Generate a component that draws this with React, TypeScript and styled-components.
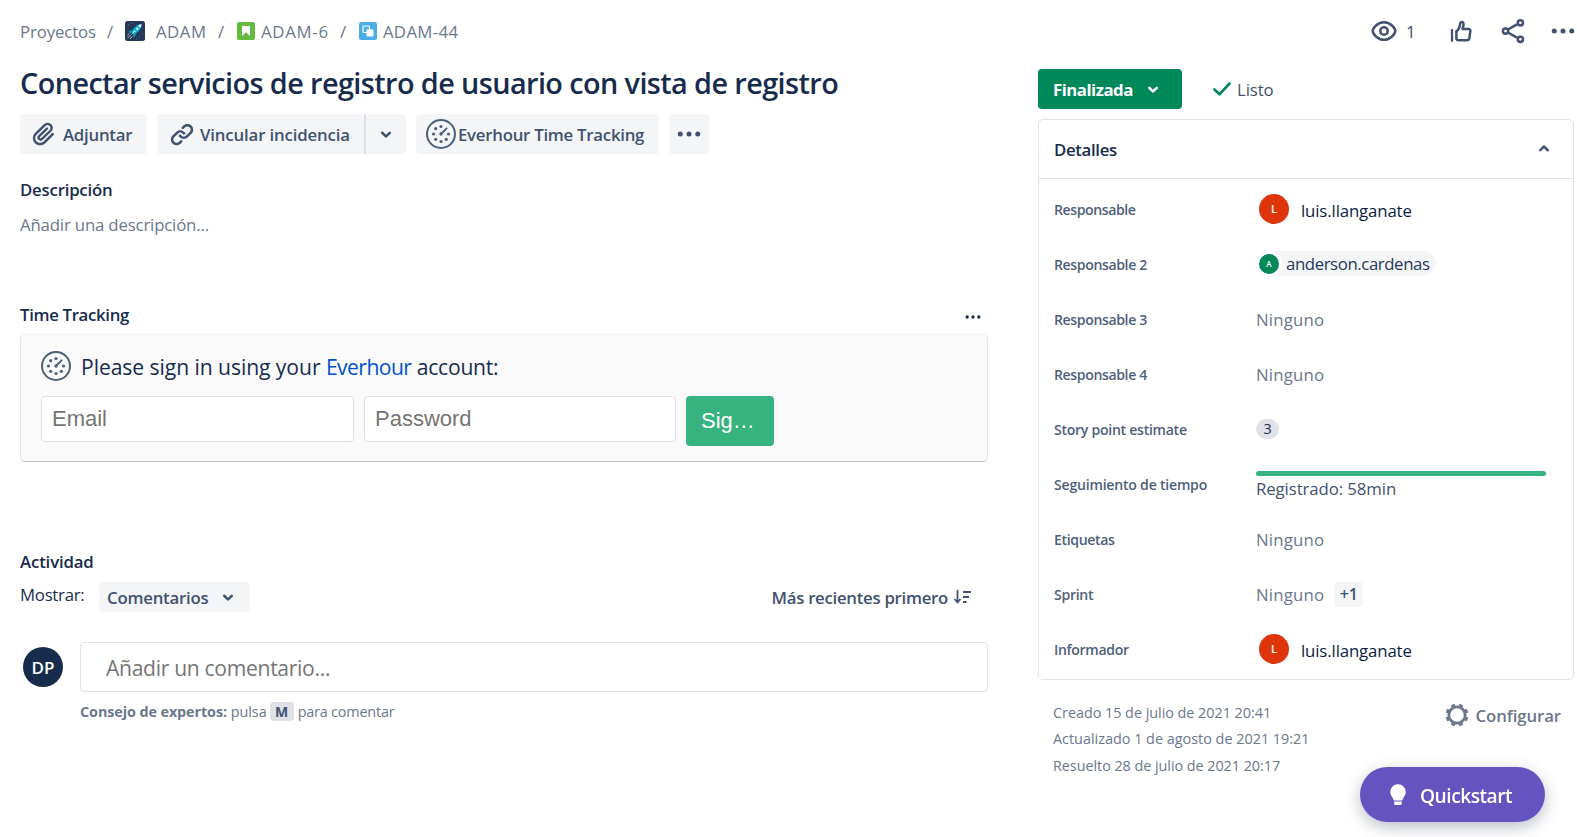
import React from 'react';
import styled, { createGlobalStyle } from 'styled-components';

const Global = createGlobalStyle`
  *, *::before, *::after { box-sizing: border-box; }
  body {
    margin: 0;
    background: #fff;
    color: #172b4d;
    font-family: "Open Sans", "Noto Sans", sans-serif;
    font-size: 16.8px;
    overflow: hidden;
  }
  button, input { font-family: inherit; font-size: inherit; border: 0; margin: 0; padding: 0; }
  svg { display: block; flex: none; }
  a { color: #0052cc; text-decoration: none; }
`;

/* ---------- layout ---------- */
const Page = styled.div`
  display: flex;
  gap: 50px;
  height: 837px;
  padding-left: 20px;
  overflow: hidden;
`;
const Main = styled.main`
  display: flex;
  flex-direction: column;
  flex: none;
  width: 968px;
`;
const Side = styled.aside`
  display: flex;
  flex-direction: column;
  flex: none;
  width: 536px;
`;

/* ---------- text ---------- */
const Text = styled.span<{ $ls?: number; $weight?: number; $color?: string; $size?: number }>`
  letter-spacing: ${(p) => p.$ls ?? 0}px;
  font-weight: ${(p) => p.$weight ?? 400};
  color: ${(p) => p.$color ?? 'inherit'};
  font-size: ${(p) => (p.$size ? `${p.$size}px` : 'inherit')};
  white-space: nowrap;
`;
const Title = styled.h1`
  margin: 12px 0 11px;
  height: 40px;
  line-height: 40px;
  font-size: 28.8px;
  font-weight: 600;
  letter-spacing: -0.58px;
  white-space: nowrap;
`;
const SectionTitle = styled.h2<{ $ls: number }>`
  margin: 0;
  height: 24px;
  line-height: 24px;
  font-size: 16.8px;
  font-weight: 600;
  letter-spacing: ${(p) => p.$ls}px;
`;

/* ---------- breadcrumb ---------- */
const Breadcrumb = styled.nav`
  display: flex;
  align-items: center;
  height: 40px;
  margin-top: 11px;
  color: #6b778c;
`;
const Slash = styled.span<{ $before: number; $after: number }>`
  margin: 0 ${(p) => p.$after}px 0 ${(p) => p.$before}px;
  width: 7px;
`;
const Crumb = styled.a<{ $gap: number; $width: number }>`
  display: flex;
  align-items: center;
  gap: ${(p) => p.$gap}px;
  width: ${(p) => p.$width}px;
  color: inherit;
`;

/* ---------- toolbar ---------- */
const Toolbar = styled.div`
  display: flex;
  gap: 10px;
  height: 40px;
`;
const ToolButton = styled.button<{ $width: number; $pad?: number; $gap?: number }>`
  display: flex;
  align-items: center;
  gap: ${(p) => p.$gap ?? 0}px;
  width: ${(p) => p.$width}px;
  height: 40px;
  padding-left: ${(p) => p.$pad ?? 0}px;
  border-radius: 4px;
  background: #f4f5f7;
  color: #42526e;
  white-space: nowrap;
`;
const SplitButton = styled.div`
  display: flex;
  border-radius: 4px;
  overflow: hidden;
  background: #f4f5f7;
  & > button { border-radius: 0; }
  & > button + button { border-left: 2px solid #dcdfe5; }
`;

const Description = styled.section`
  margin-top: 24px;
  height: 112px;
`;
const Placeholder = styled.div`
  margin-top: 10px;
  line-height: 26px;
  color: #6b778c;
`;

/* ---------- time tracking ---------- */
const SectionHead = styled.div`
  display: flex;
  justify-content: space-between;
  align-items: center;
  height: 24px;
  margin: 13px 0 7px;
  padding: 0 5px 0 0;
  & > svg { margin-top: 3px; }
`;
const TrackCard = styled.section`
  display: flex;
  flex-direction: column;
  height: 128px;
  padding: 16px 20px;
  border: 1px solid #e3e5e9;
  border-top-color: #efeff1;
  border-bottom-color: #b9c2cb;
  border-radius: 5px;
  background: #fafafa;
`;
const SignLine = styled.p`
  display: flex;
  align-items: center;
  gap: 10px;
  margin: 0 0 15px;
  height: 30px;
  font-size: 21.1px;
  white-space: pre;
`;
const Form = styled.div`
  display: flex;
  align-items: flex-start;
  gap: 10px;
  font-family: "Liberation Sans", Arial, sans-serif;
  font-size: 22px;
`;
const Field = styled.input`
  width: ${(p) => p.width}px;
  height: 46px;
  padding: 0 0 1px 10px;
  border: 1px solid #dddfe4;
  border-radius: 4px;
  background: #fff;
  outline: none;
  &::placeholder { color: #757575; opacity: 1; }
`;
const SignButton = styled.button`
  width: 88px;
  height: 50px;
  padding: 0 0 1px 15px;
  border-radius: 4px;
  background: #36b37e;
  color: #fff;
  text-align: left;
`;

/* ---------- activity ---------- */
const ActivityTitle = styled(SectionTitle)`
  margin-top: 88px;
`;
const FilterRow = styled.div`
  display: flex;
  align-items: center;
  height: 30px;
  margin-top: 8px;
`;
const ShowLabel = styled(Text)`
  width: 79px;
  padding-bottom: 6px;
`;
const FilterButton = styled.button`
  display: flex;
  align-items: center;
  justify-content: space-between;
  width: 151px;
  height: 30px;
  padding: 0 7px 0 8px;
  border-radius: 4px;
  background: #f4f5f7;
  color: #42526e;
`;
const SortButton = styled.button`
  display: flex;
  align-items: center;
  gap: 6px;
  margin-left: auto;
  padding-right: 17px;
  background: transparent;
  color: #42526e;
`;
const CommentRow = styled.div`
  display: flex;
  align-items: center;
  gap: 17px;
  height: 50px;
  margin-top: 30px;
  padding-left: 3px;
`;
const CommentBox = styled.input`
  flex: 1;
  height: 50px;
  padding: 0 0 0 25px;
  border: 1px solid #dfe1e6;
  border-radius: 4px;
  font-size: 21.1px;
  letter-spacing: -0.31px;
  outline: none;
  &::placeholder { color: #757575; opacity: 1; }
`;
const Tip = styled.p`
  display: flex;
  align-items: center;
  height: 20px;
  margin: 9px 0 0 60px;
  color: #6b778c;
  font-size: 14.4px;
`;
const Key = styled.kbd`
  width: 24px;
  height: 19px;
  margin: 0 4px 0 3px;
  border-radius: 4px;
  background: #dfe1e6;
  color: #42526e;
  font: 700 14px/19px "Open Sans", sans-serif;
  text-align: center;
`;

/* ---------- avatars ---------- */
const Avatar = styled.span<{ $size: number; $bg: string; $font: number }>`
  display: flex;
  flex: none;
  align-items: center;
  justify-content: center;
  width: ${(p) => p.$size}px;
  height: ${(p) => p.$size}px;
  border-radius: 50%;
  background: ${(p) => p.$bg};
  color: #fff;
  font-size: ${(p) => p.$font}px;
  font-weight: 600;
`;

/* ---------- side column ---------- */
const Actions = styled.div`
  display: flex;
  align-items: center;
  height: 62px;
  padding-left: 331px;
  color: #42526e;
`;
const Action = styled.span<{ $width: number }>`
  display: flex;
  flex: none;
  align-items: center;
  gap: 7px;
  width: ${(p) => p.$width}px;
`;
const StatusRow = styled.div`
  display: flex;
  align-items: center;
  height: 40px;
  margin: 7px 0 10px;
`;
const StatusButton = styled.button`
  display: flex;
  align-items: center;
  gap: 5px;
  width: 144px;
  height: 40px;
  padding-left: 15px;
  border-radius: 4px;
  background: #00875a;
  color: #fff;
`;
const Resolution = styled.span`
  display: flex;
  align-items: center;
  gap: 6px;
  margin-left: 31px;
  color: #42526e;
`;
const Panel = styled.section`
  height: 561px;
  border: 1px solid #dfe1e6;
  border-radius: 5px;
`;
const PanelHead = styled.header`
  display: flex;
  align-items: center;
  justify-content: space-between;
  height: 59px;
  padding: 0 14px 0 15px;
  border-bottom: 1px solid #dfe1e6;
  color: #172b4d;
  & > svg { color: #42526e; }
`;
const FieldRow = styled.div`
  display: grid;
  grid-template-columns: 202px 290px;
  align-items: center;
  height: 55px;
  padding-left: 15px;
  &:nth-child(2) { margin-top: 3px; }
`;
const Value = styled.div<{ $lift?: number }>`
  display: flex;
  align-items: center;
  padding-bottom: ${(p) => p.$lift ?? 0}px;
  color: #6b778c;
`;
const Person = styled(Value)`
  gap: 12px;
  padding-left: 3px;
  color: #172b4d;
  & > ${Text} { padding-top: 3px; }
`;
const UserTag = styled.span`
  display: flex;
  align-items: center;
  gap: 4px;
  height: 25px;
  padding-right: 6px;
  border-radius: 13px;
  background: #f4f5f7;
  color: #253858;
`;
const TagRing = styled.span`
  display: flex;
  padding: 3px 3px 2px;
  border-radius: 50%;
  background: #fff;
`;
const Badge = styled.span`
  width: 23px;
  height: 20px;
  border-radius: 10px;
  background: #dfe1e6;
  color: #172b4d;
  font-size: 14.4px;
  line-height: 20px;
  text-align: center;
`;
const Extra = styled.span`
  width: 29px;
  height: 25px;
  margin-left: 10px;
  border-radius: 4px;
  background: #f4f5f7;
  color: #42526e;
  font-weight: 600;
  font-size: 16px;
  line-height: 25px;
  text-align: center;
`;
const Tracking = styled.div`
  display: flex;
  flex-direction: column;
  padding-top: 2px;
  color: #42526e;
  line-height: 25px;
`;
const Bar = styled.div`
  height: 5px;
  border-radius: 2.5px;
  background: #36b37e;
`;
const Footer = styled.footer`
  display: flex;
  justify-content: space-between;
  padding: 20px 13px 0 15px;
  color: #6b778c;
`;
const Dates = styled.div`
  display: flex;
  flex-direction: column;
  font-size: 14.4px;
  line-height: 26.4px;
`;
const Configure = styled.button`
  display: flex;
  align-items: center;
  gap: 7px;
  height: 30px;
  background: transparent;
  color: #6b778c;
`;
const Quickstart = styled.button`
  position: fixed;
  left: 1360px;
  top: 767px;
  display: flex;
  align-items: center;
  gap: 7px;
  width: 185px;
  height: 55px;
  padding-left: 23px;
  border-radius: 27.5px;
  background: #6554c0;
  color: #fff;
  box-shadow: 0 5px 16px rgba(9, 30, 66, 0.28);
  & > ${Text} { padding-top: 2px; }
`;

/* ---------- icons ---------- */
type IconProps = { size?: number };
const Icon = ({ size = 30, children }: IconProps & { children: React.ReactNode }) => (
  <svg width={size} height={size} viewBox="0 0 24 24" fill="currentColor">{children}</svg>
);
const AttachIcon = () => (
  <Icon><path d="M11.643 17.965c-1.53 1.495-4.016 1.496-5.542.004a3.773 3.773 0 01.002-5.412l7.147-6.985a2.316 2.316 0 013.233-.003c.893.873.895 2.282.004 3.153l-6.703 6.55a.653.653 0 01-.914-.008.62.62 0 010-.902l6.229-6.087a.941.941 0 000-1.353.995.995 0 00-1.384 0l-6.23 6.087a2.502 2.502 0 000 3.607 2.643 2.643 0 003.683.009l6.703-6.55a4.074 4.074 0 00-.003-5.859 4.306 4.306 0 00-6.002.003l-7.148 6.985a5.655 5.655 0 00-.001 8.118c2.29 2.239 6.015 2.238 8.31-.005l6.686-6.533a.941.941 0 000-1.353.995.995 0 00-1.384 0l-6.686 6.534z" /></Icon>
);
const LinkIcon = () => (
  <Icon>
    <path d="M12.856 5.457l-.937.92a1.002 1.002 0 000 1.437 1.047 1.047 0 001.463 0l.984-.966c.967-.95 2.542-1.135 3.602-.288a2.54 2.54 0 01.203 3.81l-2.903 2.852a2.646 2.646 0 01-3.696 0l-1.11-1.09L9 13.57l1.108 1.089c1.822 1.788 4.802 1.788 6.622 0l2.905-2.852a4.558 4.558 0 00-.357-6.82c-1.893-1.517-4.695-1.226-6.422.47" />
    <path d="M11.144 19.543l.937-.92a1.002 1.002 0 000-1.437 1.047 1.047 0 00-1.462 0l-.985.966c-.967.95-2.542 1.135-3.602.288a2.54 2.54 0 01-.203-3.81l2.903-2.852a2.646 2.646 0 013.696 0l1.11 1.09L15 11.43l-1.108-1.089c-1.822-1.788-4.802-1.788-6.622 0l-2.905 2.852a4.558 4.558 0 00.357 6.82c1.893 1.517 4.695 1.226 6.422-.47" />
  </Icon>
);
const ChevronIcon = ({ up }: { up?: boolean }) => (
  <Icon><path transform={up ? 'rotate(180 12 12)' : undefined} d="M8.292 10.293a1.009 1.009 0 000 1.419l2.939 2.965c.218.215.5.322.779.322s.556-.107.769-.322l2.93-2.955a1.01 1.01 0 000-1.419.987.987 0 00-1.406 0l-2.298 2.317-2.307-2.327a.99.99 0 00-1.406 0z" /></Icon>
);
const MoreIcon = ({ size }: IconProps) => (
  <Icon size={size}><circle cx="5" cy="12" r="2" /><circle cx="12" cy="12" r="2" /><circle cx="19" cy="12" r="2" /></Icon>
);
const GaugeIcon = () => (
  <svg width="30" height="30" viewBox="0 0 30 30" fill="#505f79">
    <circle cx="15" cy="15" r="14" fill="none" stroke="#505f79" strokeWidth="2" />
    <circle cx="15" cy="7.5" r="1.6" /><circle cx="9.7" cy="9.7" r="1.6" /><circle cx="7.5" cy="15" r="1.6" />
    <circle cx="9.7" cy="20.3" r="1.6" /><circle cx="15" cy="22.5" r="1.6" /><circle cx="20.3" cy="20.3" r="1.6" />
    <circle cx="22.5" cy="15" r="1.6" /><circle cx="15" cy="15" r="1.7" />
    <path d="M15 15L20.6 9.4" stroke="#505f79" strokeWidth="2" strokeLinecap="round" />
  </svg>
);
const EyeIcon = () => (
  <Icon>
    <path d="M3 12c0-2.3 3.9-7 9-7s9 4.7 9 7-3.9 7-9 7-9-4.7-9-7z" fill="none" stroke="currentColor" strokeWidth="2" />
    <circle cx="12" cy="12" r="3" fill="none" stroke="currentColor" strokeWidth="2" />
  </Icon>
);
const LikeIcon = () => (
  <Icon>
    <path d="M4.8 11.3v8.500" fill="none" stroke="currentColor" strokeWidth="1.8" strokeLinecap="round" />
    <path d="M8.3 12.300C10.300 11 11 8.800 11.300 6.200c.2-2.100 2.700-1.900 2.700.4 0 1.400-.3 2.600-.8 3.700h4.700c1.100 0 1.700.8 1.600 1.700l-.8 5.600c-.2 1.200-.9 1.800-2 1.800H10.200c-1.200 0-1.900-.7-1.900-1.800z" fill="none" stroke="currentColor" strokeWidth="2" strokeLinejoin="round" />
  </Icon>
);
const ShareIcon = () => (
  <Icon>
    <g fill="none" stroke="currentColor" strokeWidth="2">
      <path d="M8 10.8L15.2 6.7M8 13.2l7.2 4.1" />
      <circle cx="6" cy="12" r="2.1" /><circle cx="17.9" cy="5.4" r="2.1" /><circle cx="17.9" cy="18.6" r="2.1" />
    </g>
  </Icon>
);
const CheckIcon = () => (
  <svg width="18" height="16" viewBox="0 0 18 16"><path d="M1.5 8.5l5 4.8L16.5 2.5" fill="none" stroke="#00875a" strokeWidth="2.6" strokeLinecap="round" strokeLinejoin="round" /></svg>
);
const SortIcon = () => (
  <svg width="17" height="14" viewBox="0 0 17 14" fill="none" stroke="currentColor" strokeWidth="1.8">
    <path d="M3.5 0v11" /><path d="M.5 9l3 3.3 3-3.3" /><path d="M9 2h8M9 7h6M9 12h3.5" />
  </svg>
);
const GearIcon = () => (
  <svg width="24" height="24" viewBox="0 0 24 24" fill="none" stroke="currentColor">
    <circle cx="12" cy="12" r="8.2" strokeWidth="2.8" />
    {[22.5, 67.5, 112.5, 157.5, 202.5, 247.5, 292.5, 337.5].map((a) => (
      <path key={a} d="M12 4V.6" strokeWidth="4" transform={`rotate(${a} 12 12)`} />
    ))}
  </svg>
);
const BulbIcon = () => (
  <Icon>
    <path d="M12 3.5a6 6 0 00-6.200 6c0 2.400 1.300 3.400 2.200 5.200.4.800.5 1.600 1 1.600h6c.5 0 .6-.8 1-1.600.9-1.800 2.200-2.800 2.200-5.200a6 6 0 00-6.200-6z" />
    <path d="M9 17.2h6v1.700c0 .6-.4 1-1 1h-4c-.6 0-1-.4-1-1z" />
  </Icon>
);
const RocketLogo = () => (
  <svg width="20" height="20" viewBox="0 0 20 20">
    <rect width="20" height="20" rx="2.5" fill="#253858" />
    <path d="M3 4h1M7 2.500h1M16.500 13h1M14 16h1M2.500 10h1M11 18h1" stroke="#5e6c84" />
    <path d="M7.500 8.500L3.500 11 6 12.300zM11.300 12.800L9.200 16.800 7.800 14.200z" fill="#00a3bf" />
    <path d="M16.500 3.300c-4 .2-8 3.100-10.200 8.200l2.200 2.200c5-2.200 7.900-6.300 8-10.400z" fill="#00b8d9" />
    <path d="M16.500 3.300c-1.300 0-2.500.4-3.700 1l2.700 2.800c.7-1.300 1-2.500 1-3.800z" fill="#deebff" />
    <path d="M7.600 12.400l2.700-2.700" stroke="#deebff" strokeWidth="1.300" />
    <circle cx="12.300" cy="7.700" r="1.200" fill="#deebff" />
    <path d="M2.800 16.800l3.200-3.200M5.500 17.500l1.500-1.800M2.700 13.800l1.300-1" stroke="#c1c7d0" strokeWidth="1" strokeLinecap="round" />
  </svg>
);
const StoryLogo = () => (
  <svg width="18" height="18" viewBox="0 0 18 18">
    <rect width="18" height="18" rx="2" fill="#63ba3c" />
    <path d="M5 4.800c0-.6.300-.8.800-.8h6.400c.5 0 .8.200.8.800V14l-4-3.800L5 14z" fill="#fff" />
  </svg>
);
const SubtaskLogo = () => (
  <svg width="18" height="18" viewBox="0 0 18 18">
    <rect width="18" height="18" rx="2" fill="#4bade8" />
    <rect x="4" y="4" width="6.5" height="6.5" rx="1" fill="none" stroke="#fff" strokeWidth="1.2" />
    <rect x="7.5" y="7.5" width="7" height="7" rx="1" fill="#fff" />
  </svg>
);

/* ---------- rows ---------- */
const FieldLabel = ({ ls, children }: { ls: number; children: string }) => (
  <Text $size={14.1} $weight={600} $color="#505f79" $ls={ls}>{children}</Text>
);
const None = () => <Text $ls={0.19}>Ninguno</Text>;
const Luis = () => (
  <Person $lift={2}>
    <Avatar $size={30} $bg="#de350b" $font={11}>L</Avatar>
    <Text $ls={-0.13} $color="#091e42">luis.llanganate</Text>
  </Person>
);

export default function App() {
  return (
    <>
      <Global />
      <Page>
        <Main>
          <Breadcrumb>
            <Text $ls={-0.12}>Proyectos</Text>
            <Slash $before={11} $after={11}>/</Slash>
            <Crumb $gap={11} $width={82}><RocketLogo /><Text $ls={0.53}>ADAM</Text></Crumb>
            <Slash $before={11} $after={12}>/</Slash>
            <Crumb $gap={6} $width={92}><StoryLogo /><Text $ls={0.72}>ADAM-6</Text></Crumb>
            <Slash $before={11} $after={12}>/</Slash>
            <Crumb $gap={6} $width={101}><SubtaskLogo /><Text $ls={0.34}>ADAM-44</Text></Crumb>
          </Breadcrumb>
          <Title>Conectar servicios de registro de usuario con vista de registro</Title>
          <Toolbar>
            <ToolButton $width={127} $pad={9} $gap={4}><AttachIcon /><Text $ls={-0.25} $weight={600}>Adjuntar</Text></ToolButton>
            <SplitButton>
              <ToolButton $width={207} $pad={10} $gap={3}><LinkIcon /><Text $ls={-0.15} $weight={600}>Vincular incidencia</Text></ToolButton>
              <ToolButton $width={42} $pad={5}><ChevronIcon /></ToolButton>
            </SplitButton>
            <ToolButton $width={243} $pad={10} $gap={2}><GaugeIcon /><Text $ls={-0.25} $weight={600}>Everhour Time Tracking</Text></ToolButton>
            <ToolButton $width={40} $pad={5}><MoreIcon /></ToolButton>
          </Toolbar>
          <Description>
            <SectionTitle $ls={-0.21}>Descripción</SectionTitle>
            <Placeholder><Text $ls={-0.17}>Añadir una descripción...</Text></Placeholder>
          </Description>
          <SectionHead>
            <SectionTitle $ls={-0.33}>Time Tracking</SectionTitle>
            <MoreIcon size={20} />
          </SectionHead>
          <TrackCard>
            <SignLine>
              <GaugeIcon />
              <span>
                <Text $ls={-0.06}>Please sign in using your </Text>
                <a href="#everhour"><Text $ls={-0.55}>Everhour</Text></a>
                <Text $ls={-0.22}> account:</Text>
              </span>
            </SignLine>
            <Form>
              <Field width={313} placeholder="Email" />
              <Field width={312} placeholder="Password" />
              <SignButton>Sig…</SignButton>
            </Form>
          </TrackCard>
          <ActivityTitle $ls={-0.15}>Actividad</ActivityTitle>
          <FilterRow>
            <ShowLabel $ls={-0.28}>Mostrar:</ShowLabel>
            <FilterButton><Text $ls={-0.22} $weight={600}>Comentarios</Text><ChevronIcon /></FilterButton>
            <SortButton><Text $ls={-0.28} $weight={600}>Más recientes primero</Text><SortIcon /></SortButton>
          </FilterRow>
          <CommentRow>
            <Avatar $size={40} $bg="#172b4d" $font={17}>DP</Avatar>
            <CommentBox placeholder="Añadir un comentario..." />
          </CommentRow>
          <Tip>
            <Text $ls={-0.1} $weight={700}>Consejo de expertos:</Text>
            <Text $ls={-0.03}>&nbsp;pulsa</Text>
            <Key>M</Key>
            <Text $ls={-0.19}>para comentar</Text>
          </Tip>
        </Main>
        <Side>
          <Actions>
            <Action $width={77}><EyeIcon /><Text>1</Text></Action>
            <Action $width={52}><LikeIcon /></Action>
            <Action $width={50}><ShareIcon /></Action>
            <MoreIcon />
          </Actions>
          <StatusRow>
            <StatusButton><Text $ls={-0.5} $weight={700}>Finalizada</Text><ChevronIcon /></StatusButton>
            <Resolution><CheckIcon /><Text $ls={-0.12}>Listo</Text></Resolution>
          </StatusRow>
          <Panel>
            <PanelHead><Text $ls={-0.34} $weight={600}>Detalles</Text><ChevronIcon up /></PanelHead>
            <FieldRow><FieldLabel ls={-0.42}>Responsable</FieldLabel><Luis /></FieldRow>
            <FieldRow>
              <FieldLabel ls={-0.39}>Responsable 2</FieldLabel>
              <Value $lift={3}>
                <UserTag>
                  <TagRing><Avatar $size={20} $bg="#00875a" $font={8}>A</Avatar></TagRing>
                  <Text $ls={-0.41}>anderson.cardenas</Text>
                </UserTag>
              </Value>
            </FieldRow>
            <FieldRow><FieldLabel ls={-0.39}>Responsable 3</FieldLabel><Value><None /></Value></FieldRow>
            <FieldRow><FieldLabel ls={-0.39}>Responsable 4</FieldLabel><Value><None /></Value></FieldRow>
            <FieldRow><FieldLabel ls={-0.29}>Story point estimate</FieldLabel><Value $lift={2}><Badge>3</Badge></Value></FieldRow>
            <FieldRow>
              <FieldLabel ls={-0.23}>Seguimiento de tiempo</FieldLabel>
              <Tracking><Bar /><Text $ls={-0.09}>Registrado: 58min</Text></Tracking>
            </FieldRow>
            <FieldRow><FieldLabel ls={-0.36}>Etiquetas</FieldLabel><Value><None /></Value></FieldRow>
            <FieldRow><FieldLabel ls={-0.3}>Sprint</FieldLabel><Value><None /><Extra>+1</Extra></Value></FieldRow>
            <FieldRow><FieldLabel ls={-0.35}>Informador</FieldLabel><Luis /></FieldRow>
          </Panel>
          <Footer>
            <Dates>
              <Text $ls={-0.03}>Creado 15 de julio de 2021 20:41</Text>
              <Text>Actualizado 1 de agosto de 2021 19:21</Text>
              <Text $ls={-0.05}>Resuelto 28 de julio de 2021 20:17</Text>
            </Dates>
            <Configure><GearIcon /><Text $ls={-0.1} $weight={600}>Configurar</Text></Configure>
          </Footer>
        </Side>
      </Page>
      <Quickstart><BulbIcon /><Text $size={19.2} $ls={-0.5} $weight={600}>Quickstart</Text></Quickstart>
    </>
  );
}
